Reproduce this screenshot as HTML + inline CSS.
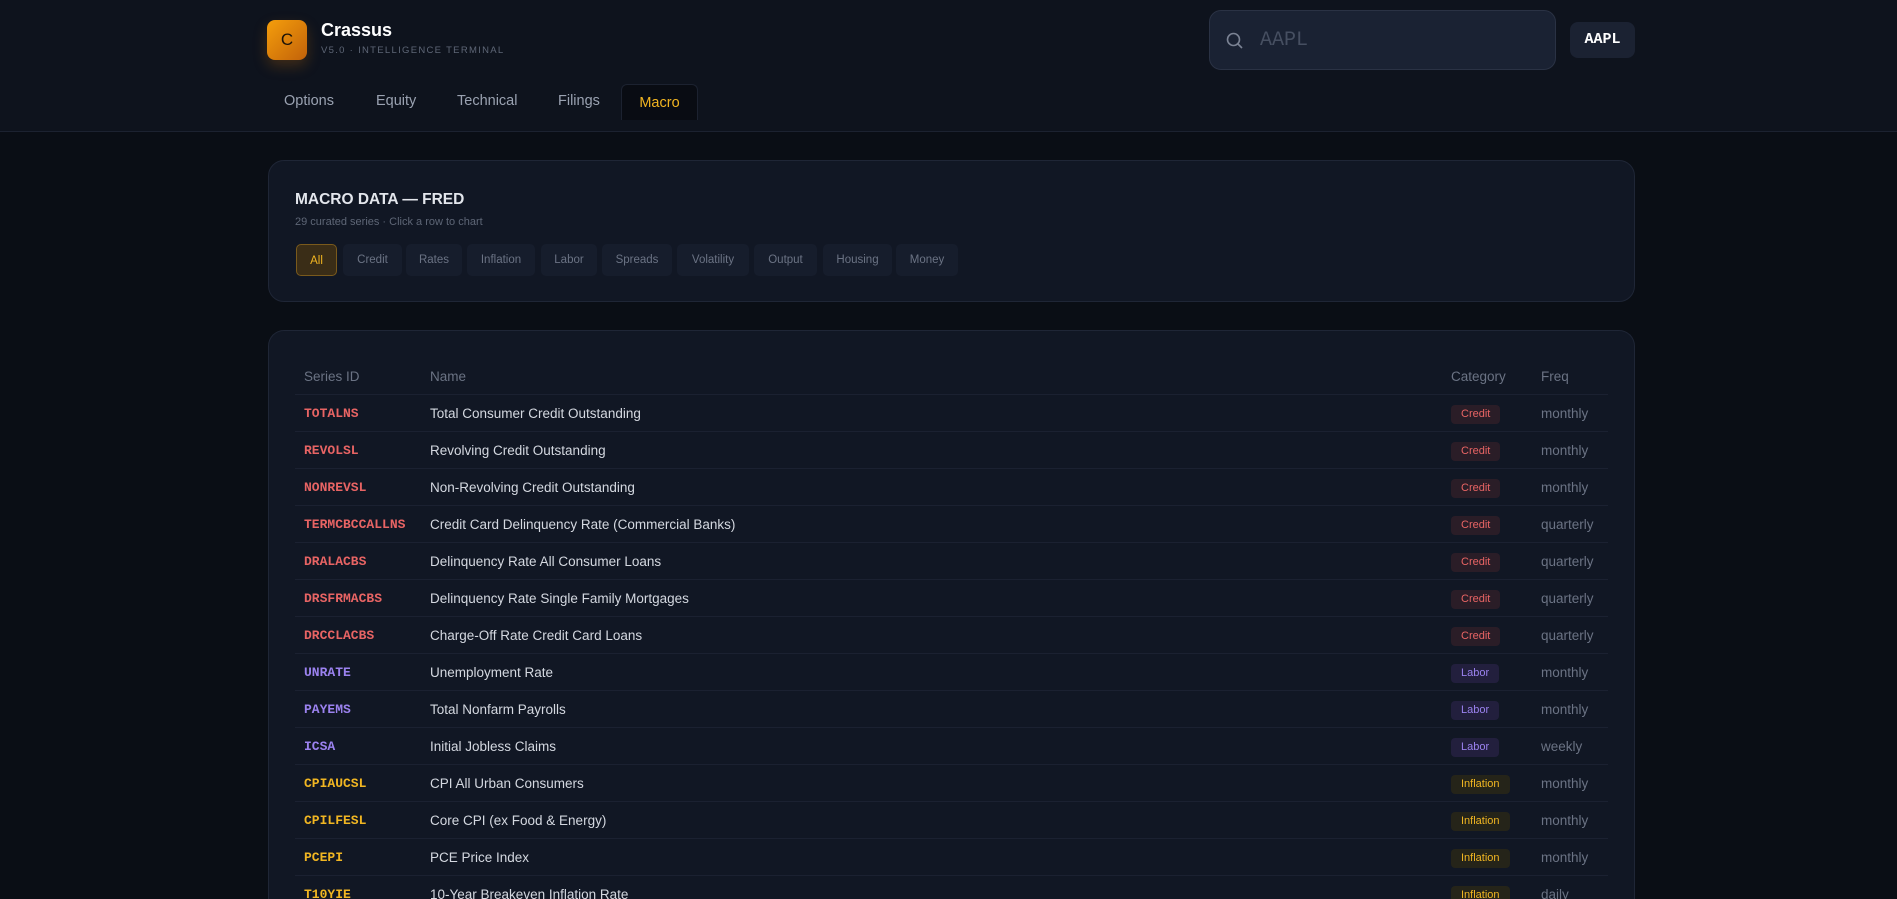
<!DOCTYPE html>
<html style="width:1897px;height:899px;overflow:hidden"><head><meta charset="utf-8"><style>
*{box-sizing:border-box;margin:0;padding:0}
body{width:1897px;height:899px;overflow:hidden;background:#0a0e15;font-family:"Liberation Sans",sans-serif;position:relative}
.hdr{position:absolute;left:0;top:0;width:1897px;height:132px;background:#0e131d;border-bottom:1px solid #1c2230}
.logo{position:absolute;left:267px;top:20px;width:40px;height:40px;border-radius:8px;background:linear-gradient(135deg,#f59e0b,#c2620a);box-shadow:0 6px 14px rgba(217,119,6,.25);color:#1a1208;font-size:17px;text-align:center;line-height:40px}
.brand{position:absolute;left:321px;top:20px;color:#fff;font-weight:bold;font-size:18px}
.sub{position:absolute;left:321px;top:45px;color:#5e6676;font-size:9.5px;letter-spacing:1.3px}
.tab{position:absolute;top:93px;color:#9aa2b1;font-size:14.5px}
.mac{position:absolute;left:621px;top:84px;width:77px;height:36px;background:#090c13;border:1px solid #1c2230;border-bottom:none;border-radius:6px 6px 0 0;color:#f2b521;font-size:14.5px;text-align:center;line-height:36px}
.search{position:absolute;left:1209px;top:10px;width:347px;height:60px;border:1px solid #2a3244;border-radius:12px;background:#1a2233}
.search span{position:absolute;left:50px;top:18px;font-family:"Liberation Mono",monospace;font-size:20px;color:#464f61}
.btn{position:absolute;left:1570px;top:22px;width:65px;height:36px;background:#1b2232;border-radius:8px;color:#fff;font-weight:bold;font-family:"Liberation Mono",monospace;font-size:15px;text-align:center;line-height:36px}
.card{position:absolute;left:268px;width:1367px;background:#111724;border:1px solid #1f2636;border-radius:16px}
.chip{position:absolute;top:83px;height:32px;line-height:32px;background:#161d2c;border-radius:5px;color:#6b7384;font-size:11.5px;text-align:center}
.row{position:absolute;left:26px;width:1313px;height:37px;border-top:1px solid #1b2131}
.id{position:absolute;left:9px;top:11px;font-family:"Liberation Mono",monospace;font-weight:bold;font-size:13px}
.nm{position:absolute;left:135px;top:11px;color:#d4d8e0;font-size:13.5px}
.bd{position:absolute;left:1156px;top:10px;height:19px;line-height:19px;padding:0 10px;border-radius:4px;font-size:11px}
.fq{position:absolute;left:1246px;top:11px;color:#6b7384;font-size:13.5px}
.r{color:#e86464}.rb{background:#2a1d27;color:#e86464}
.p{color:#9b82ef}.pb{background:#221f3d;color:#9b82ef}
.y{color:#f1b622}.yb{background:#252419;color:#f1b622}
</style></head><body>
<div class="hdr">
<div class="logo">C</div>
<div class="brand">Crassus</div>
<div class="sub">V5.0 · INTELLIGENCE TERMINAL</div>
<div class="tab" style="left:284px">Options</div>
<div class="tab" style="left:376px">Equity</div>
<div class="tab" style="left:457px">Technical</div>
<div class="tab" style="left:558px">Filings</div>
<div class="mac">Macro</div>
<div class="search"><svg style="position:absolute;left:15px;top:20px" width="20" height="20" viewBox="0 0 20 20" fill="none" stroke="#7b8394" stroke-width="1.6"><circle cx="8.5" cy="8.5" r="6"/><path d="M13 13l4 4"/></svg><span>AAPL</span></div>
<div class="btn">AAPL</div>
</div>
<div class="card" style="top:160px;height:142px">
<div style="position:absolute;left:26px;top:30px;color:#e3e6ec;font-weight:bold;font-size:15.5px">MACRO DATA — FRED</div>
<div style="position:absolute;left:26px;top:55px;color:#5e6676;font-size:11px">29 curated series · Click a row to chart</div>
<div class="chip" style="left:27px;width:41px;background:#3a2d17;border:1px solid #7a5a1c;color:#f2b521">All</div>
<div class="chip" style="left:74px;width:59px">Credit</div>
<div class="chip" style="left:137px;width:56px">Rates</div>
<div class="chip" style="left:198px;width:68px">Inflation</div>
<div class="chip" style="left:272px;width:56px">Labor</div>
<div class="chip" style="left:333px;width:70px">Spreads</div>
<div class="chip" style="left:408px;width:72px">Volatility</div>
<div class="chip" style="left:485px;width:63px">Output</div>
<div class="chip" style="left:554px;width:69px">Housing</div>
<div class="chip" style="left:627px;width:62px">Money</div>
</div>
<div class="card" style="top:330px;height:569px;border-bottom:none;border-radius:16px 16px 0 0">
<div style="position:absolute;left:35px;top:38px;color:#6b7384;font-size:13.5px">Series ID</div>
<div style="position:absolute;left:161px;top:38px;color:#6b7384;font-size:13.5px">Name</div>
<div style="position:absolute;left:1182px;top:38px;color:#6b7384;font-size:13.5px">Category</div>
<div style="position:absolute;left:1272px;top:38px;color:#6b7384;font-size:13.5px">Freq</div>
<div class="row" style="top:63px"><span class="id r">TOTALNS</span><span class="nm">Total Consumer Credit Outstanding</span><span class="bd rb">Credit</span><span class="fq">monthly</span></div>
<div class="row" style="top:100px"><span class="id r">REVOLSL</span><span class="nm">Revolving Credit Outstanding</span><span class="bd rb">Credit</span><span class="fq">monthly</span></div>
<div class="row" style="top:137px"><span class="id r">NONREVSL</span><span class="nm">Non-Revolving Credit Outstanding</span><span class="bd rb">Credit</span><span class="fq">monthly</span></div>
<div class="row" style="top:174px"><span class="id r">TERMCBCCALLNS</span><span class="nm">Credit Card Delinquency Rate (Commercial Banks)</span><span class="bd rb">Credit</span><span class="fq">quarterly</span></div>
<div class="row" style="top:211px"><span class="id r">DRALACBS</span><span class="nm">Delinquency Rate All Consumer Loans</span><span class="bd rb">Credit</span><span class="fq">quarterly</span></div>
<div class="row" style="top:248px"><span class="id r">DRSFRMACBS</span><span class="nm">Delinquency Rate Single Family Mortgages</span><span class="bd rb">Credit</span><span class="fq">quarterly</span></div>
<div class="row" style="top:285px"><span class="id r">DRCCLACBS</span><span class="nm">Charge-Off Rate Credit Card Loans</span><span class="bd rb">Credit</span><span class="fq">quarterly</span></div>
<div class="row" style="top:322px"><span class="id p">UNRATE</span><span class="nm">Unemployment Rate</span><span class="bd pb">Labor</span><span class="fq">monthly</span></div>
<div class="row" style="top:359px"><span class="id p">PAYEMS</span><span class="nm">Total Nonfarm Payrolls</span><span class="bd pb">Labor</span><span class="fq">monthly</span></div>
<div class="row" style="top:396px"><span class="id p">ICSA</span><span class="nm">Initial Jobless Claims</span><span class="bd pb">Labor</span><span class="fq">weekly</span></div>
<div class="row" style="top:433px"><span class="id y">CPIAUCSL</span><span class="nm">CPI All Urban Consumers</span><span class="bd yb">Inflation</span><span class="fq">monthly</span></div>
<div class="row" style="top:470px"><span class="id y">CPILFESL</span><span class="nm">Core CPI (ex Food &amp; Energy)</span><span class="bd yb">Inflation</span><span class="fq">monthly</span></div>
<div class="row" style="top:507px"><span class="id y">PCEPI</span><span class="nm">PCE Price Index</span><span class="bd yb">Inflation</span><span class="fq">monthly</span></div>
<div class="row" style="top:544px"><span class="id y">T10YIE</span><span class="nm">10-Year Breakeven Inflation Rate</span><span class="bd yb">Inflation</span><span class="fq">daily</span></div>
</div>
</body></html>
